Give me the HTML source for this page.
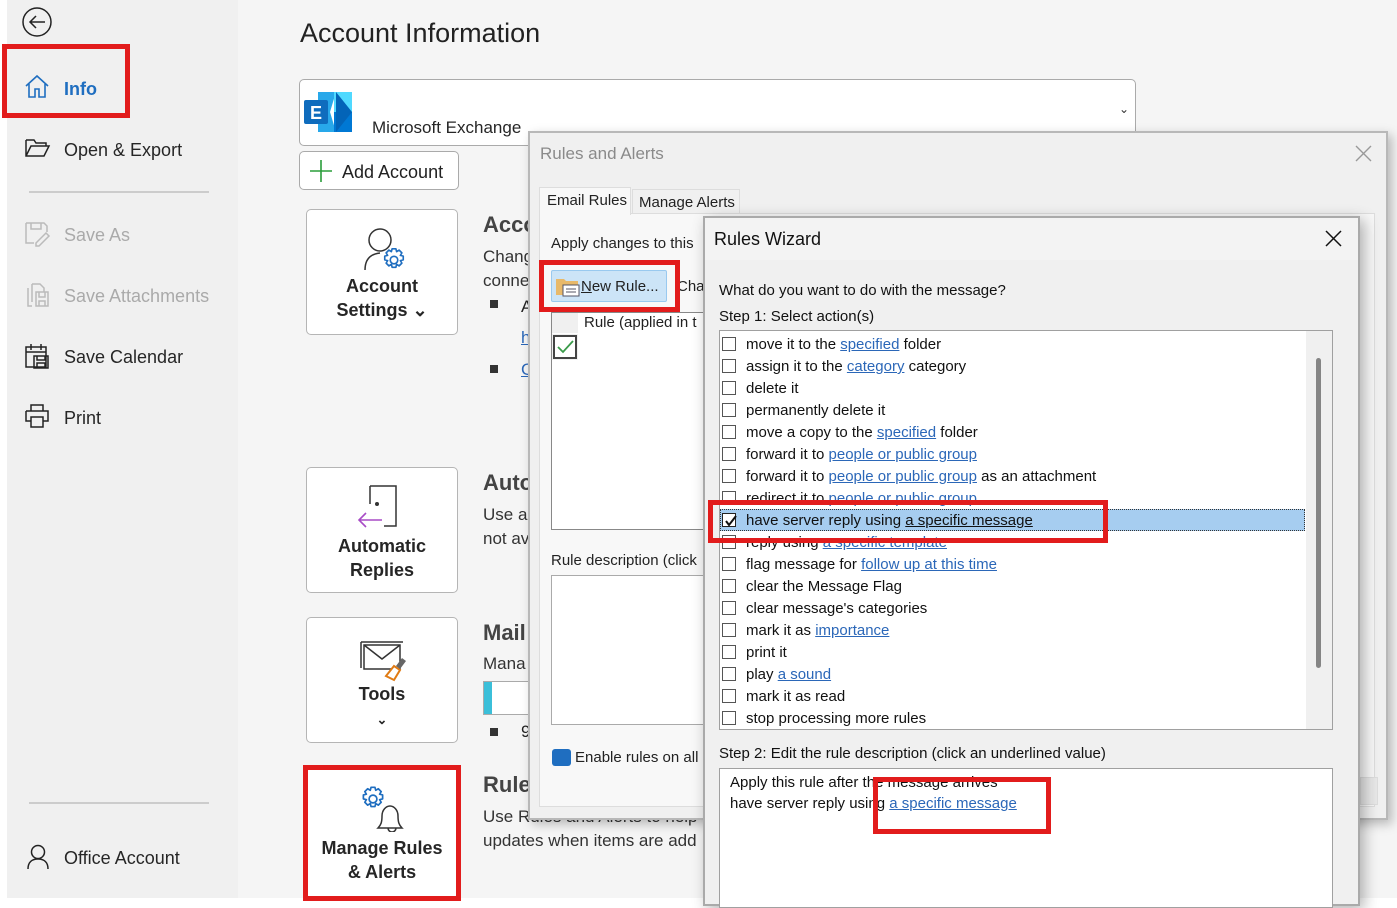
<!DOCTYPE html>
<html><head><meta charset="utf-8"><style>
*{margin:0;padding:0;box-sizing:border-box}
body{width:1397px;height:901px;position:relative;overflow:hidden;background:#fff;font-family:"Liberation Sans",sans-serif;color:#222}
.a{position:absolute;white-space:nowrap}
.side{left:7px;top:0;width:231px;height:898px;background:#f0f0f0}
.main{left:238px;top:0;width:1159px;height:898px;background:#f5f5f5}
.mi{font-size:18px;line-height:22px;color:#262626}
.red{position:absolute;border:5px solid #e21c1c}
.tile{position:absolute;background:#fff;border:1px solid #b5b5b5;border-radius:5px;text-align:center;font-weight:bold;font-size:18px;line-height:24px;color:#262626}
.lk{color:#2b67b8;text-decoration:underline}
.it{position:absolute;left:722px;font-size:15px;line-height:20px;color:#111}
.cb{display:inline-block;width:14px;height:14px;border:1px solid #555;background:#fff;vertical-align:-2px;margin-right:10px}
</style></head><body>
<div class="a side"></div>
<div class="a main"></div>

<svg width="0" height="0" style="position:absolute"><defs><g id="gear"><path d="M-1.5 -9h3l.6 2.3 2-1.2 2.2 2.2-1.2 2 2.3.6v3l-2.3.6 1.2 2-2.2 2.2-2-1.2-.6 2.3h-3l-.6-2.3-2 1.2-2.2-2.2 1.2-2-2.3-.6v-3l2.3-.6-1.2-2 2.2-2.2 2 1.2z" fill="#fff" stroke="#1f6ec0" stroke-width="1.3" stroke-linejoin="round"/><circle r="3" fill="none" stroke="#1f6ec0" stroke-width="1.3"/></g></defs></svg>

<!-- sidebar -->
<svg class="a" style="left:22px;top:7px" width="32" height="32"><circle cx="15" cy="15" r="14" fill="none" stroke="#222" stroke-width="1.5"/><path d="M8 15h15M14 9l-6 6 6 6" fill="none" stroke="#222" stroke-width="1.5"/></svg>
<div class="red" style="left:2px;top:44px;width:128px;height:74px"></div>
<svg class="a" style="left:24px;top:74px" width="26" height="26"><path d="M2 12L13 2l11 10M5 10v13h6v-8h4v8h6V10" fill="none" stroke="#1f6ec0" stroke-width="1.6"/></svg>
<div class="a mi" style="left:64px;top:78px;color:#1f6ec0;font-weight:bold">Info</div>
<svg class="a" style="left:24px;top:137px" width="28" height="22"><path d="M2 3h8l2 3h10v3M2 3v16h18l5-10H7L2 19" fill="none" stroke="#222" stroke-width="1.5"/></svg>
<div class="a mi" style="left:64px;top:139px">Open &amp; Export</div>
<div class="a" style="left:29px;top:191px;width:180px;height:2px;background:#ccc"></div>
<svg class="a" style="left:24px;top:221px" width="28" height="26"><path d="M2 2h18l3 3v6M2 2v20h8M7 2v6h10V2M12 22l10-10 3 3-10 10h-3z" fill="none" stroke="#bbb" stroke-width="1.5"/></svg>
<div class="a mi" style="left:64px;top:224px;color:#aaa">Save As</div>
<svg class="a" style="left:26px;top:282px" width="26" height="26"><path d="M6 2h8l4 4v4M2 6v18h4M6 2v18M10 10h12v14H10zM13 10v5h6v-5M13 24v-5h6v5" fill="none" stroke="#bbb" stroke-width="1.5"/></svg>
<div class="a mi" style="left:64px;top:285px;color:#aaa">Save Attachments</div>
<svg class="a" style="left:24px;top:342px" width="28" height="28"><path d="M2 5h20v20H2zM2 10h20M7 2v6M17 2v6M10 14h14v12H10zM13 14v4h8v-4M13 26v-5h8v5" fill="none" stroke="#222" stroke-width="1.5"/></svg>
<div class="a mi" style="left:64px;top:346px">Save Calendar</div>
<svg class="a" style="left:24px;top:403px" width="28" height="26"><path d="M7 8V2h12v6M2 8h22v10h-5M7 18H2V8M7 14h12v10H7z" fill="none" stroke="#222" stroke-width="1.5"/></svg>
<div class="a mi" style="left:64px;top:407px">Print</div>
<div class="a" style="left:29px;top:802px;width:180px;height:2px;background:#ccc"></div>
<svg class="a" style="left:26px;top:844px" width="24" height="26"><circle cx="12" cy="8" r="6.5" fill="none" stroke="#222" stroke-width="1.5"/><path d="M2 25c0-7 4-10 10-10s10 3 10 10" fill="none" stroke="#222" stroke-width="1.5"/></svg>
<div class="a mi" style="left:64px;top:847px">Office Account</div>

<!-- main -->
<div class="a" style="left:300px;top:16px;font-size:27px;line-height:34px;color:#222">Account Information</div>
<div class="a" style="left:299px;top:79px;width:837px;height:67px;background:#fff;border:1px solid #aaa;border-radius:5px"></div>
<svg class="a" style="left:304px;top:90px" width="50" height="44"><path d="M14 2h18l-6 20 6 20H14z" fill="#28a8ea"/><path d="M30 2h18v20H30z" fill="#50d9ff"/><path d="M30 22h18v20H30z" fill="#0078d4"/><path d="M32 2l16 20-16 20" fill="#0364b8"/><rect x="0" y="10" width="24" height="24" rx="2" fill="#0f6cbd"/><text x="6" y="29" font-family="Liberation Sans" font-weight="bold" font-size="18" fill="#fff">E</text></svg>
<div class="a" style="left:372px;top:117px;font-size:17px;line-height:22px;color:#262626">Microsoft Exchange</div>
<div class="a" style="left:1119px;top:102px;font-size:12px;color:#333">&#8964;</div>
<div class="a" style="left:299px;top:151px;width:160px;height:39px;background:#fff;border:1px solid #aaa;border-radius:5px"></div>
<svg class="a" style="left:309px;top:159px" width="24" height="24"><path d="M12 1v22M1 12h22" stroke="#2a9d3a" stroke-width="1.6"/></svg>
<div class="a" style="left:342px;top:161px;font-size:18px;line-height:22px">Add Account</div>

<div class="tile" style="left:306px;top:209px;width:152px;height:126px;padding-top:64px">Account<br>Settings &#8964;</div>
<svg class="a" style="left:362px;top:226px" width="50" height="50"><circle cx="18" cy="14" r="11" fill="none" stroke="#333" stroke-width="1.5"/><path d="M3 44c0-10 5-16 15-17" fill="none" stroke="#333" stroke-width="1.5"/><g transform="translate(32,34) scale(1.25)"><use href="#gear"/></g></svg>
<div class="tile" style="left:306px;top:467px;width:152px;height:126px;padding-top:66px">Automatic<br>Replies</div>
<svg class="a" style="left:356px;top:484px" width="42" height="46"><path d="M14 2h26v40H28M14 2v18" fill="none" stroke="#333" stroke-width="1.5"/><circle cx="21" cy="20" r="2" fill="#333"/><path d="M26 36H3M10 29l-7 7 7 7" fill="none" stroke="#a84cc6" stroke-width="1.6"/></svg>
<div class="tile" style="left:306px;top:617px;width:152px;height:126px;padding-top:64px">Tools<br><span style="font-size:13px">&#8964;</span></div>
<svg class="a" style="left:360px;top:638px" width="48" height="46"><path d="M1 4V30M1 4h42" stroke="#333" stroke-width="1.5"/><rect x="4" y="7" width="36" height="24" fill="#fff" stroke="#333" stroke-width="1.5"/><path d="M4 7l18 14 18-14" fill="none" stroke="#333" stroke-width="1.5"/><path d="M26 38l8-10 6 4-6 10z" fill="#fff" stroke="#e07b14" stroke-width="2"/><path d="M36 28l6-8 4 3-6 8z" fill="#666"/></svg>
<div class="tile" style="left:306px;top:768px;width:152px;height:130px;padding-top:67px">Manage Rules<br>&amp; Alerts</div>
<svg class="a" style="left:358px;top:784px" width="48" height="48"><g transform="translate(15,15) scale(1.3)"><use href="#gear"/></g><path d="M24 44h20c-3-3-4-6-4-12 0-6-4-10-8-10s-8 4-8 10c0 6-1 9-4 12zM30 44a4 4 0 0 0 8 0" fill="#fff" stroke="#333" stroke-width="1.5"/></svg>
<div class="red" style="left:303px;top:765px;width:158px;height:136px"></div>

<div class="a" style="left:483px;top:212px;font-size:22px;font-weight:bold;color:#444">Acco</div>
<div class="a" style="left:483px;top:245px;font-size:17px;line-height:24px;color:#333">Chang<br>conne</div>
<div class="a" style="left:490px;top:300px;width:8px;height:8px;background:#333"></div>
<div class="a" style="left:521px;top:297px;font-size:17px">A</div>
<div class="a lk" style="left:521px;top:328px;font-size:17px">h</div>
<div class="a" style="left:490px;top:365px;width:8px;height:8px;background:#333"></div>
<div class="a lk" style="left:521px;top:360px;font-size:17px">G</div>
<div class="a" style="left:483px;top:470px;font-size:22px;font-weight:bold;color:#444">Auto</div>
<div class="a" style="left:483px;top:503px;font-size:17px;line-height:24px;color:#333">Use a<br>not av</div>
<div class="a" style="left:483px;top:620px;font-size:22px;font-weight:bold;color:#444">Mail</div>
<div class="a" style="left:483px;top:654px;font-size:17px;color:#333">Mana</div>
<div class="a" style="left:483px;top:681px;width:50px;height:34px;border:1px solid #aaa;background:#fff"></div>
<div class="a" style="left:484px;top:682px;width:8px;height:32px;background:#3bbfd9"></div>
<div class="a" style="left:490px;top:728px;width:8px;height:8px;background:#333"></div>
<div class="a" style="left:521px;top:722px;font-size:17px">9</div>
<div class="a" style="left:483px;top:772px;font-size:22px;font-weight:bold;color:#444">Rule</div>
<div class="a" style="left:483px;top:805px;font-size:17px;line-height:24px;color:#333">Use Rules and Alerts to help<br>updates when items are add</div>

<!-- Rules and Alerts dialog -->
<div class="a" style="left:528px;top:131px;width:860px;height:689px;background:#f0f0f0;border:2px solid #b8b8b8;box-shadow:4px 4px 10px rgba(0,0,0,.25)"></div>
<div class="a" style="left:540px;top:144px;font-size:17px;color:#8a8a8a">Rules and Alerts</div>
<svg class="a" style="left:1355px;top:145px" width="17" height="17"><path d="M1 1l15 15M16 1L1 16" stroke="#999" stroke-width="1.4"/></svg>
<div class="a" style="left:539px;top:213px;width:836px;height:594px;background:#f8f8f8;border:1px solid #ddd"></div>
<div class="a" style="left:539px;top:187px;width:92px;height:28px;background:#f8f8f8;border:1px solid #ddd;border-bottom:none;font-size:15px;line-height:26px;padding-left:7px">Email Rules</div>
<div class="a" style="left:632px;top:189px;width:108px;height:25px;background:#f0f0f0;border:1px solid #ddd;font-size:15px;line-height:26px;padding-left:6px">Manage Alerts</div>
<div class="a" style="left:551px;top:235px;font-size:15px">Apply changes to this</div>
<div class="a" style="left:551px;top:270px;width:116px;height:32px;background:#cce4f7;border:1px solid #99c9ef;border-radius:2px"></div>
<svg class="a" style="left:555px;top:275px" width="26" height="24"><path d="M1 4h8l2 2h12v14H1z" fill="#e8b96a"/><rect x="8" y="10" width="16" height="11" fill="#fff" stroke="#556" stroke-width="1"/><path d="M11 14h10M11 17h10" stroke="#556"/></svg>
<div class="a" style="left:581px;top:278px;font-size:15px"><u>N</u>ew Rule...</div>
<div class="a" style="left:677px;top:278px;font-size:15px">Char</div>
<div class="red" style="left:539px;top:260px;width:141px;height:52px"></div>
<div class="a" style="left:551px;top:312px;width:160px;height:218px;background:#fff;border:1px solid #888"></div>
<div class="a" style="left:552px;top:313px;width:26px;height:20px;background:#f0f0f0"></div>
<div class="a" style="left:584px;top:313px;font-size:15px;line-height:20px">Rule (applied in t</div>
<div class="a" style="left:552px;top:334px;width:26px;height:26px;background:#f0f0f0"></div>
<div class="a" style="left:553px;top:335px;width:24px;height:24px;border:2px solid #444;background:#fff"></div>
<svg class="a" style="left:556px;top:339px" width="18" height="16"><path d="M2 8l5 5 10-11" fill="none" stroke="#3a9b4a" stroke-width="1.8"/></svg>
<div class="a" style="left:551px;top:552px;font-size:15px">Rule description (click</div>
<div class="a" style="left:551px;top:575px;width:160px;height:150px;background:#fff;border:1px solid #aaa"></div>
<div class="a" style="left:552px;top:749px;width:19px;height:17px;background:#1f6ec0;border-radius:3px"></div>
<div class="a" style="left:575px;top:749px;font-size:15px;height:16px;overflow:hidden">Enable rules on all</div>
<div class="a" style="left:1360px;top:777px;width:18px;height:28px;background:#e8e8e8;border:1px solid #ddd"></div>

<!-- Rules Wizard -->
<div class="a" style="left:703px;top:216px;width:657px;height:690px;background:#f0f0f0;border:2px solid #aaa;box-shadow:4px 4px 14px rgba(0,0,0,.3)"></div>
<div class="a" style="left:705px;top:218px;width:653px;height:42px;background:#f3f3f3"></div>
<div class="a" style="left:714px;top:228px;font-size:18px;line-height:22px;color:#111">Rules Wizard</div>
<svg class="a" style="left:1325px;top:230px" width="17" height="17"><path d="M1 1l15 15M16 1L1 16" stroke="#111" stroke-width="1.5"/></svg>
<div class="a" style="left:719px;top:282px;font-size:15px;color:#111">What do you want to do with the message?</div>
<div class="a" style="left:719px;top:308px;font-size:15px;color:#111">Step 1: Select action(s)</div>
<div class="a" style="left:719px;top:330px;width:614px;height:400px;background:#fff;border:1px solid #a0a0a0"></div>
<div class="a" style="left:1306px;top:331px;width:26px;height:398px;background:#f0f0f0"></div>
<div class="a" style="left:1316px;top:358px;width:5px;height:310px;background:#858585;border-radius:3px"></div>
<div class="a" style="left:720px;top:509px;width:585px;height:22px;background:#a6cdf0;border:1px dotted #333"></div>
<div class="it" style="top:335px"><span class="cb"></span>move it to the <span class="lk">specified</span> folder</div>
<div class="it" style="top:357px"><span class="cb"></span>assign it to the <span class="lk">category</span> category</div>
<div class="it" style="top:379px"><span class="cb"></span>delete it</div>
<div class="it" style="top:401px"><span class="cb"></span>permanently delete it</div>
<div class="it" style="top:423px"><span class="cb"></span>move a copy to the <span class="lk">specified</span> folder</div>
<div class="it" style="top:445px"><span class="cb"></span>forward it to <span class="lk">people or public group</span></div>
<div class="it" style="top:467px"><span class="cb"></span>forward it to <span class="lk">people or public group</span> as an attachment</div>
<div class="it" style="top:489px"><span class="cb"></span>redirect it to <span class="lk">people or public group</span></div>
<div class="it" style="top:511px"><span class="cb" style="border-color:#222"></span>have server reply using <u>a specific message</u></div>
<svg class="a" style="left:724px;top:514px" width="14" height="14"><path d="M2 7l3 4 7-9" fill="none" stroke="#111" stroke-width="2"/></svg>
<div class="it" style="top:533px"><span class="cb"></span>reply using <span class="lk">a specific template</span></div>
<div class="it" style="top:555px"><span class="cb"></span>flag message for <span class="lk">follow up at this time</span></div>
<div class="it" style="top:577px"><span class="cb"></span>clear the Message Flag</div>
<div class="it" style="top:599px"><span class="cb"></span>clear message's categories</div>
<div class="it" style="top:621px"><span class="cb"></span>mark it as <span class="lk">importance</span></div>
<div class="it" style="top:643px"><span class="cb"></span>print it</div>
<div class="it" style="top:665px"><span class="cb"></span>play <span class="lk">a sound</span></div>
<div class="it" style="top:687px"><span class="cb"></span>mark it as read</div>
<div class="it" style="top:709px"><span class="cb"></span>stop processing more rules</div>
<div class="red" style="left:708px;top:500px;width:400px;height:43px"></div>
<div class="a" style="left:719px;top:745px;font-size:15px;color:#111">Step 2: Edit the rule description (click an underlined value)</div>
<div class="a" style="left:719px;top:768px;width:614px;height:140px;background:#fff;border:1px solid #a0a0a0"></div>
<div class="a" style="left:730px;top:772px;font-size:15px;line-height:21px;color:#111">Apply this rule after the message arrives<br>have server reply using <span class="lk">a specific message</span></div>
<div class="red" style="left:873px;top:777px;width:178px;height:57px"></div>
</body></html>
